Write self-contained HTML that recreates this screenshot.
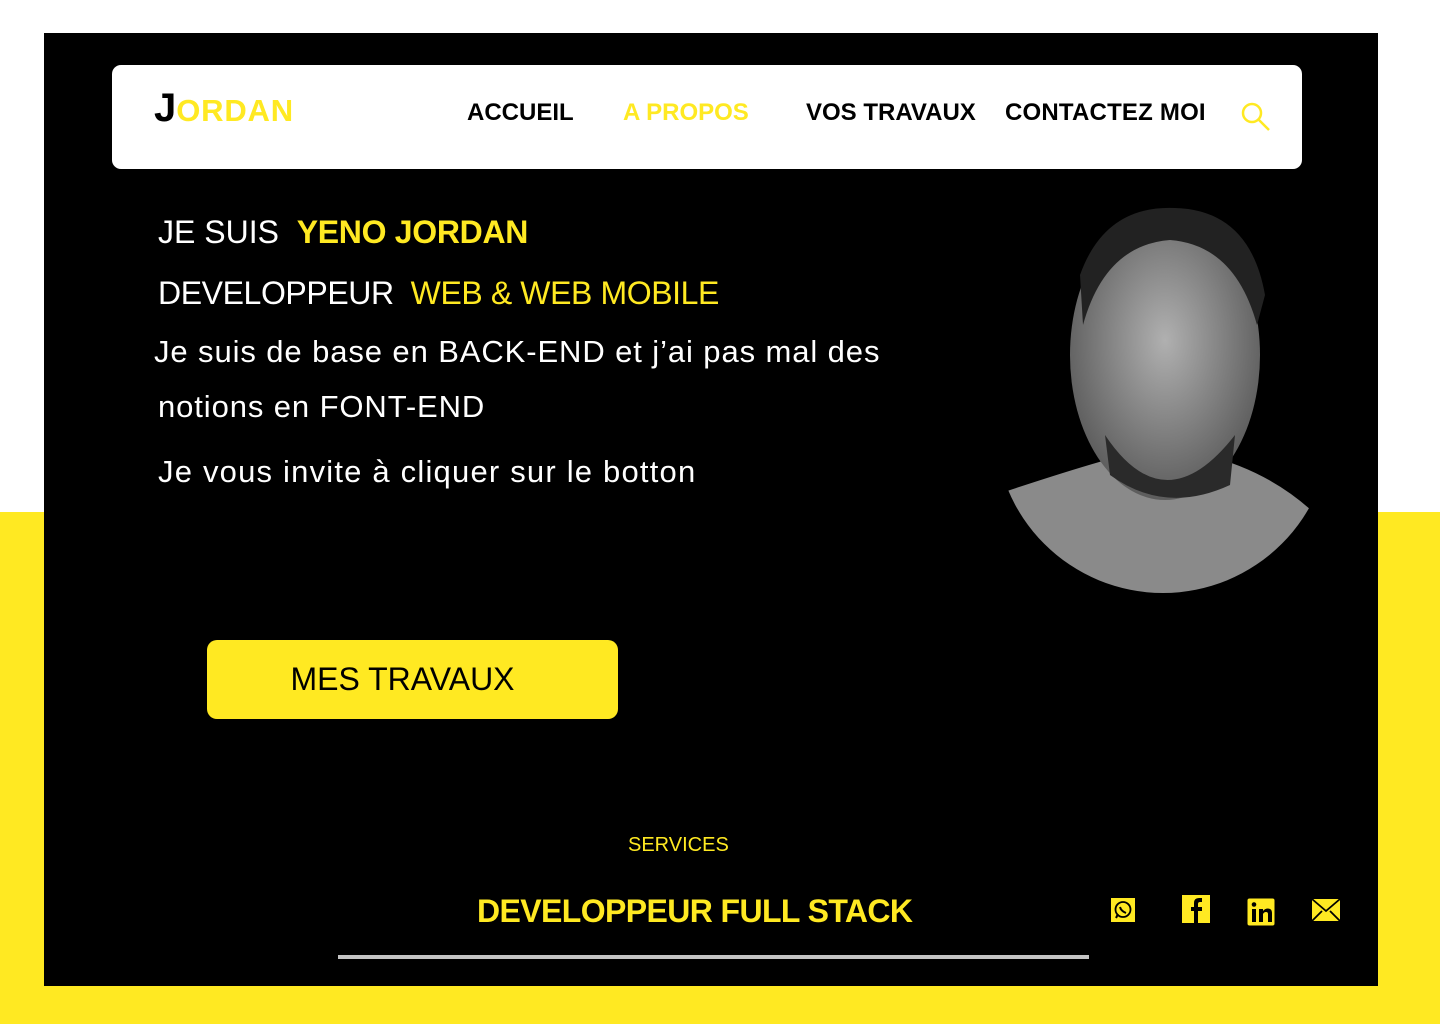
<!DOCTYPE html>
<html><head><meta charset="utf-8"><style>
*{margin:0;padding:0;box-sizing:border-box}
body{width:1440px;height:1024px;background:#fff;position:relative;overflow:hidden;font-family:"Liberation Sans",sans-serif}
.yb{position:absolute;left:0;top:512px;width:1440px;height:512px;background:#ffe922}
.main{position:absolute;left:44px;top:33px;width:1334px;height:953px;background:#000}
.nav{position:absolute;left:112px;top:65px;width:1190px;height:104px;background:#fff;border-radius:9px}
.t{position:absolute;white-space:nowrap}
.nv{font-weight:bold;font-size:24px;top:99px;color:#000}
.y{color:#ffe922}
.w{color:#fff}
</style></head><body>
<div class="yb"></div>
<div class="main"></div>
<div class="nav"></div>
<div class="t" style="left:154px;top:86px;font-size:40px;font-weight:bold;color:#000">J<span class="y" style="font-size:31px;letter-spacing:0.8px">ORDAN</span></div>
<div class="t nv" style="left:467px">ACCUEIL</div>
<div class="t nv y" style="left:623px">A PROPOS</div>
<div class="t nv" style="left:806px">VOS TRAVAUX</div>
<div class="t nv" style="left:1005px;letter-spacing:0.2px">CONTACTEZ MOI</div>
<svg class="t" style="left:1240px;top:100px" width="32" height="32" viewBox="0 0 32 32"><circle cx="12" cy="13" r="9" fill="none" stroke="#ffe922" stroke-width="2.5"/><line x1="19" y1="20" x2="29" y2="30" stroke="#ffe922" stroke-width="2.5"/></svg>
<div class="t w" style="left:158px;top:214px;font-size:32px">JE SUIS &nbsp;<b class="y" style="letter-spacing:-0.3px">YENO JORDAN</b></div>
<div class="t w" style="left:158px;top:275px;font-size:32px;letter-spacing:-0.4px">DEVELOPPEUR &nbsp;<span class="y">WEB &amp; WEB MOBILE</span></div>
<div class="t w" style="left:154px;top:334px;font-size:31px;letter-spacing:0.9px">Je suis de base en BACK-END et j’ai pas mal des</div>
<div class="t w" style="left:158px;top:389px;font-size:31px;letter-spacing:0.9px">notions en FONT-END</div>
<div class="t w" style="left:158px;top:454px;font-size:31px;letter-spacing:1.2px">Je vous invite à cliquer sur le botton</div>
<svg class="t" style="left:995px;top:205px" width="340" height="390" viewBox="0 0 340 390">
<defs><clipPath id="c"><circle cx="168" cy="220" r="168"/></clipPath>
<radialGradient id="g" cx="50%" cy="45%" r="60%"><stop offset="0" stop-color="#b0b0b0"/><stop offset="1" stop-color="#555"/></radialGradient></defs>
<path clip-path="url(#c)" d="M0 290 Q90 260 130 250 L210 250 Q290 270 340 330 L340 390 L0 390Z" fill="#8a8a8a"/>
<ellipse cx="170" cy="150" rx="95" ry="145" fill="url(#g)"/>
<path d="M85 70 Q110 0 180 3 Q255 5 270 90 L262 120 Q240 40 175 35 Q110 40 88 120Z" fill="#222"/>
<path d="M110 230 Q170 320 240 230 L235 280 Q170 310 115 270Z" fill="#2a2a2a"/>
</svg>
<div class="t" style="left:207px;top:640px;width:411px;height:79px;background:#ffe922;border-radius:10px;font-size:32px;color:#000;text-align:center;line-height:79px;text-indent:-20px">MES TRAVAUX</div>
<div class="t y" style="left:628px;top:834px;font-size:20px">SERVICES</div>
<div class="t y" style="left:477px;top:893px;font-size:32px;font-weight:bold;letter-spacing:-0.6px">DEVELOPPEUR FULL STACK</div>
<div class="t" style="left:338px;top:955px;width:751px;height:4px;background:#c4c4c4"></div>
<svg class="t" style="left:1110px;top:897px" width="26" height="26" viewBox="0 0 26 26"><rect x="1" y="1" width="24" height="24" fill="#ffe922"/><circle cx="13" cy="12.5" r="7.5" fill="none" stroke="#000" stroke-width="1.8"/><path d="M6 21l2-4" stroke="#000" stroke-width="2"/><path d="M10 10q1 4 6 6" stroke="#000" stroke-width="2" fill="none"/></svg>
<svg class="t" style="left:1182px;top:895px" width="28" height="28" viewBox="0 0 28 28"><rect x="0" y="0" width="28" height="28" fill="#ffe922"/><path d="M16 28V16h4v-4h-4V9q0-2 2-2h2V3h-3q-5 0-5 5v4H9v4h3v12z" fill="#000"/></svg>
<svg class="t" style="left:1247px;top:898px" width="28" height="28" viewBox="0 0 28 28"><rect x="0.5" y="0.5" width="27" height="27" rx="2" fill="#ffe922"/><rect x="5" y="11" width="4" height="13" fill="#000"/><circle cx="7" cy="6.5" r="2.3" fill="#000"/><path d="M12 11h4v2q2-2.5 5-2.5 4 0 4 5V24h-4v-8q0-2-2-2t-3 2v8h-4z" fill="#000"/></svg>
<svg class="t" style="left:1311px;top:898px" width="30" height="24" viewBox="0 0 30 24"><rect x="1" y="1" width="28" height="22" fill="#ffe922"/><path d="M1 1l14 12L29 1M1 23l10-10M29 23L19 13" stroke="#000" stroke-width="1.8" fill="none"/></svg>
</body></html>
